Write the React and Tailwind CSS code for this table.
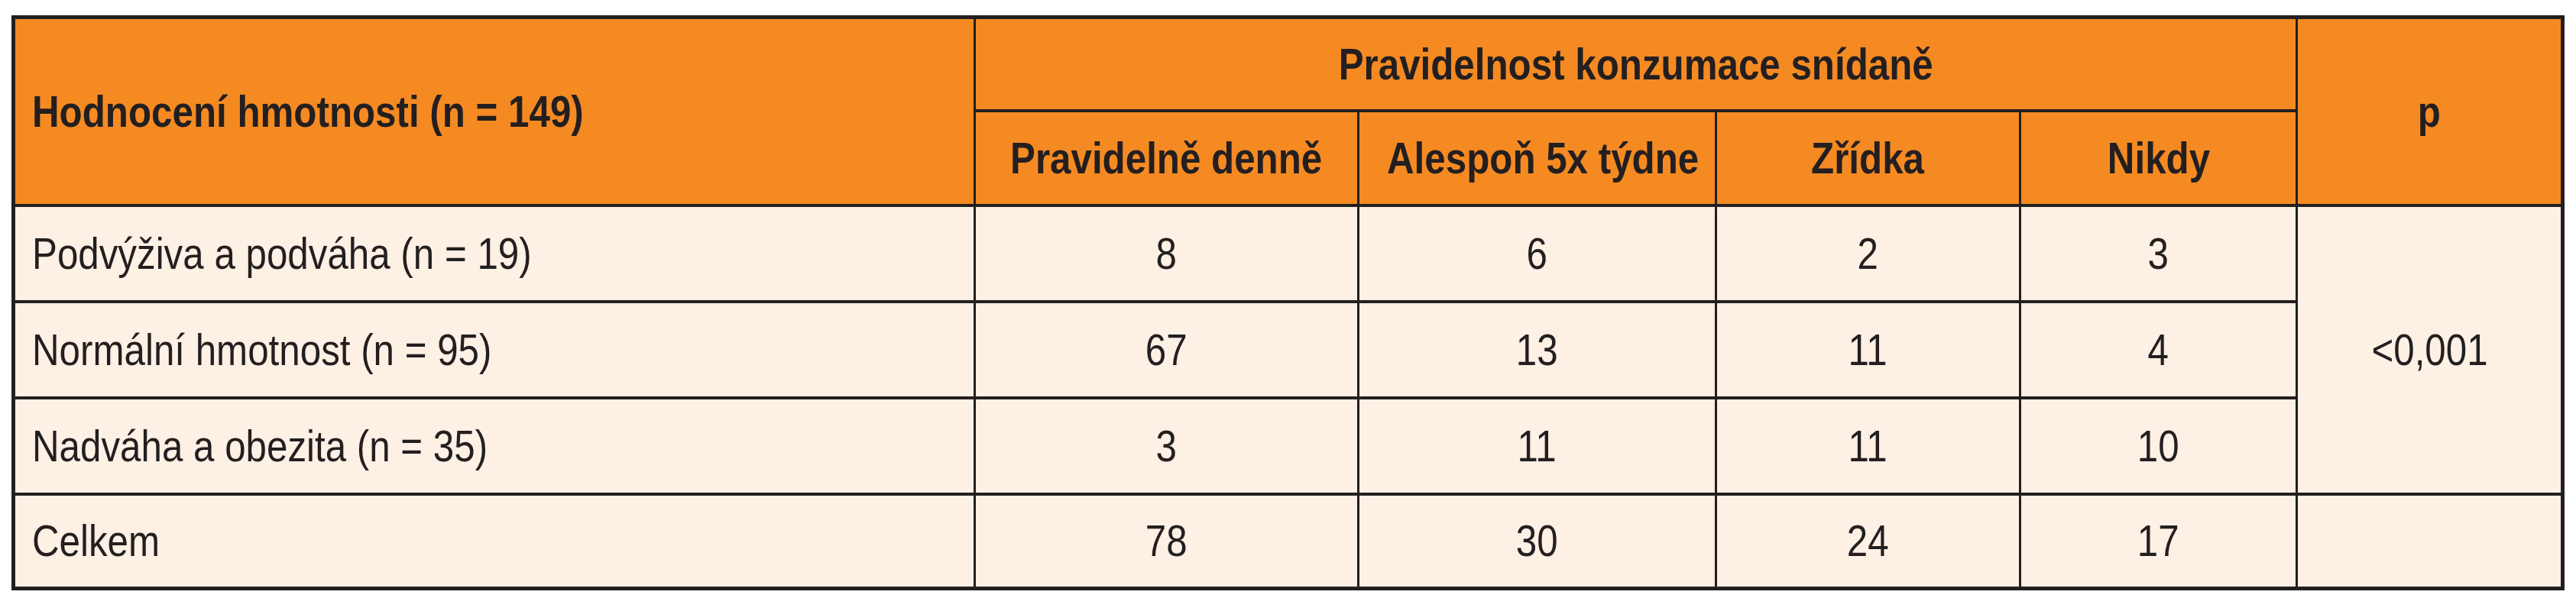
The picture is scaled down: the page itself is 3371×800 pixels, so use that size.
import React from 'react';

const rows = [
    { label: 'Podvýživa a podváha (n = 19)', values: ['8', '6', '2', '3'] },
    { label: 'Normální hmotnost (n = 95)', values: ['67', '13', '11', '4'] },
    { label: 'Nadváha a obezita (n = 35)', values: ['3', '11', '11', '10'] },
];

const total = { label: 'Celkem', values: ['78', '30', '24', '17'] };

const cell = 'border-x-[3px] border-y-[4px] border-[#231f20] p-0 align-middle';
const headCell = `${cell} text-center font-bold`;
const narrow = 'inline-block scale-x-85 whitespace-nowrap';

export default function App() {
    return (
        <div className="min-h-screen bg-white pt-[20px] px-[15px] font-['Liberation_Sans',Arial,sans-serif] text-[#231f20]">
            <table className="table-fixed border-collapse border-[5px] border-[#231f20] w-[3341px] text-[58px] leading-none">
                <colgroup>
                    <col className="w-[1258px]" />
                    <col className="w-[502px]" />
                    <col className="w-[468px]" />
                    <col className="w-[398px]" />
                    <col className="w-[362px]" />
                    <col className="w-[348px]" />
                </colgroup>
                <thead className="bg-[#f58a23]">
                    <tr className="h-[122px]">
                        <th rowSpan={2} className={`${cell} text-left font-bold pl-[22px]`}>
                            <span className={`${narrow} origin-left`}>Hodnocení hmotnosti (n = 149)</span>
                        </th>
                        <th colSpan={4} className={headCell}>
                            <span className={`${narrow} origin-center`}>Pravidelnost konzumace snídaně</span>
                        </th>
                        <th rowSpan={2} className={headCell}>
                            <span className={`${narrow} origin-center`}>p</span>
                        </th>
                    </tr>
                    <tr className="h-[124px]">
                        {['Pravidelně denně', 'Alespoň 5x týdne', 'Zřídka', 'Nikdy'].map((h) => (
                            <th key={h} className={headCell}>
                                <span className={`${narrow} origin-center`}>{h}</span>
                            </th>
                        ))}
                    </tr>
                </thead>
                <tbody className="bg-[#fdf0e4]">
                    {rows.map((row, i) => (
                        <tr key={row.label} className="h-[126px]">
                            <td className={`${cell} text-left pl-[22px]`}>
                                <span className={`${narrow} origin-left`}>{row.label}</span>
                            </td>
                            {row.values.map((v, j) => (
                                <td key={j} className={`${cell} text-center`}>
                                    <span className={`${narrow} origin-center`}>{v}</span>
                                </td>
                            ))}
                            {i === 0 && (
                                <td rowSpan={3} className={`${cell} text-center`}>
                                    <span className={`${narrow} origin-center`}>&lt;0,001</span>
                                </td>
                            )}
                        </tr>
                    ))}
                    <tr className="h-[124px]">
                        <td className={`${cell} text-left pl-[22px]`}>
                            <span className={`${narrow} origin-left`}>{total.label}</span>
                        </td>
                        {total.values.map((v, j) => (
                            <td key={j} className={`${cell} text-center`}>
                                <span className={`${narrow} origin-center`}>{v}</span>
                            </td>
                        ))}
                        <td className={cell}></td>
                    </tr>
                </tbody>
            </table>
        </div>
    );
}
